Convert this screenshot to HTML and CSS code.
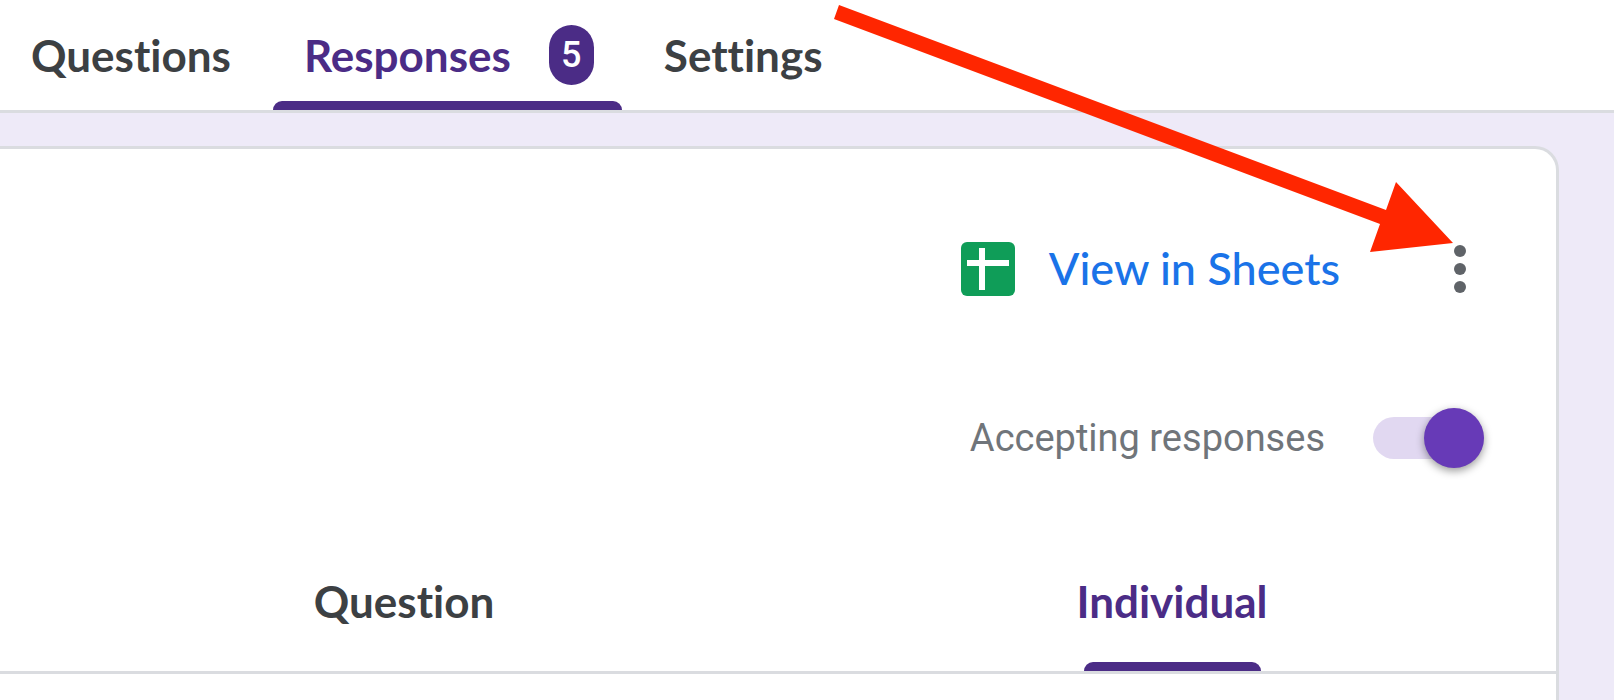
FILE: index.html
```
<!DOCTYPE html>
<html lang="en">
<head>
<meta charset="UTF-8">
<meta name="viewport" content="width=device-width, initial-scale=1.0">
<title>Responses</title>
<link rel="stylesheet" href="styles.css">
</head>
<body>
<nav class="tabs">
    <button type="button" class="tab">Questions</button>
    <button type="button" class="tab active">Responses <span class="badge">5</span></button>
    <button type="button" class="tab">Settings</button>
</nav>

<main class="card">
    <div class="actions">
        <a href="#" class="sheets-link">
            <svg class="sheets-icon" viewBox="0 0 54 54" aria-hidden="true">
                <rect width="54" height="54" rx="6" fill="#0f9d58"/>
                <path d="M18 6h6v12h24v6H24v24h-6V24H6v-6h12z" fill="#fff"/>
            </svg>
            <span>View in Sheets</span>
        </a>
        <button type="button" class="menu-button" aria-label="More options">
            <svg width="12" height="48" viewBox="0 0 12 48" fill="#5f6368" aria-hidden="true">
                <circle cx="6" cy="6" r="6"/>
                <circle cx="6" cy="24" r="6"/>
                <circle cx="6" cy="42" r="6"/>
            </svg>
        </button>
    </div>

    <div class="accepting">
        <label for="accepting">Accepting responses</label>
        <input type="checkbox" class="toggle" id="accepting" checked>
    </div>

    <div class="views">
        <button type="button" class="view">Question</button>
        <button type="button" class="view active">Individual</button>
    </div>
</main>

<svg class="arrow" width="620" height="256" viewBox="0 0 620 256" aria-hidden="true">
    <path d="M6 5L553 210L563 182L620 243L537 252L547 224L1 19z" fill="#ff2600"/>
</svg>
</body>
</html>
```

FILE: styles.css
```
* {
    box-sizing: border-box;
}
body {
    margin: 0;
    min-height: 100vh;
    display: flex;
    flex-direction: column;
    position: relative;
    overflow: hidden;
    background-color: #eeeaf8;
    font-family: Lato, "Open Sans", sans-serif;
    font-variant-ligatures: none;
    color: #3c4043;
}
button {
    border: none;
    padding: 0;
    background: none;
    font: inherit;
    font-variant-ligatures: none;
    color: inherit;
    cursor: pointer;
}
.tabs {
    display: flex;
    height: 113px;
    padding-left: 31px;
    gap: 42px;
    background-color: #fff;
    border-bottom: 3px solid #dadce0;
}
.tab, .view {
    position: relative;
    font-size: 44px;
    line-height: 60px;
    font-weight: 700;
}
.tab {
    display: flex;
    align-items: center;
    gap: 38px;
}
.active {
    color: #4b2c86;
}
.tab.active {
    padding: 0 28px 0 31px;
}
.active::after {
    content: "";
    position: absolute;
    bottom: 0;
    left: 0;
    right: 0;
    height: 9px;
    border-radius: 9px 9px 0 0;
    background-color: #4b2c86;
}
.badge {
    width: 45px;
    height: 60px;
    border-radius: 23px;
    background-color: #4b2c86;
    color: #fff;
    font-family: Roboto, sans-serif;
    font-size: 36px;
    font-weight: 500;
    text-align: center;
}
.card {
    flex: 1;
    margin: 33px 55px 0 0;
    background-color: #fff;
    border: 3px solid #dadce0;
    border-width: 3px 3px 0 0;
    border-radius: 0 24px 0 0;
}
.actions {
    display: flex;
    justify-content: flex-end;
    align-items: center;
    padding: 83px 72px 0 0;
    gap: 96px;
}
.sheets-link {
    display: flex;
    align-items: center;
    gap: 34px;
    color: #1a73e8;
    font-size: 45px;
    line-height: 72px;
    font-weight: 500;
    text-decoration: none;
}
.sheets-link span {
    padding-bottom: 2px;
}
.sheets-icon {
    width: 54px;
    height: 54px;
}
.menu-button {
    display: flex;
    justify-content: center;
    align-items: center;
    width: 48px;
    height: 72px;
}
.accepting {
    display: flex;
    justify-content: flex-end;
    align-items: center;
    gap: 48px;
    padding: 102px 72px 0 0;
    font-family: Roboto, sans-serif;
    font-size: 38px;
    line-height: 60px;
    color: #70757a;
}
.toggle {
    appearance: none;
    position: relative;
    width: 111px;
    height: 42px;
    margin: 0;
    border-radius: 21px;
    background-color: #e1d8f1;
    cursor: pointer;
}
.toggle::before {
    content: "";
    position: absolute;
    top: -9px;
    left: 0;
    width: 60px;
    height: 60px;
    border-radius: 50%;
    background-color: #fff;
    box-shadow: 0 3px 9px rgba(0, 0, 0, 0.4);
}
.toggle:checked::before {
    left: auto;
    right: 0;
    background-color: #673ab7;
}
.views {
    display: flex;
    margin-top: 65px;
    padding-left: 20px;
    border-bottom: 3px solid #dadce0;
}
.view {
    flex: 1;
    height: 138px;
    padding-bottom: 2px;
}
.view.active::after {
    left: 50%;
    width: 177px;
    margin-left: -88px;
}
.arrow {
    position: absolute;
    top: 0;
    right: 161px;
    pointer-events: none;
}
```
